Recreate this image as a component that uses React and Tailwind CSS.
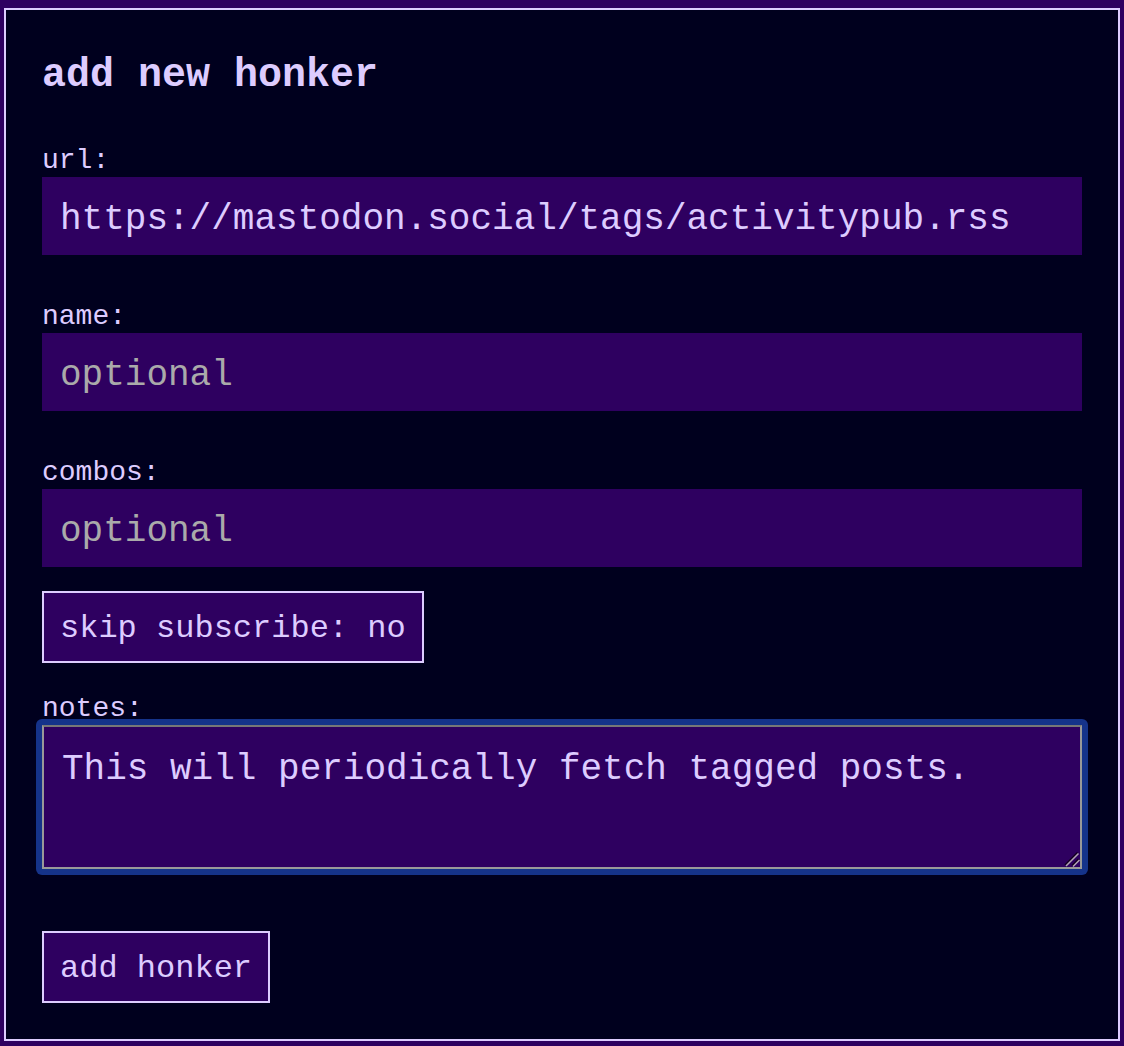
import React from "react";

const field =
  "block h-[78px] w-full bg-[#2e0060] px-[18px] pt-1.5 text-[36px] text-[#ddccff] outline-none placeholder:text-[#aaaaaa] placeholder:opacity-100";
const button =
  "block h-[72px] border-2 border-[#ddccff] bg-[#2e0060] px-4 pt-1 text-[32px] leading-9";
const label = "block text-[28px] leading-8";

function Field({ id, title, ...props }) {
  return (
    <div>
      <label htmlFor={id} className={label}>{title}</label>
      <input id={id} type="text" className={field} {...props} />
    </div>
  );
}

function ResizeGrip() {
  return (
    <svg
      aria-hidden="true"
      className="pointer-events-none absolute right-2 bottom-2 size-4"
      viewBox="0 0 16 16"
      fill="none"
      strokeWidth="1.5"
    >
      <path d="M1 14 13.5 1.5M8 14.5 14.5 8" stroke="#12001f" />
      <path d="M2 15 14.5 2.5M9 15.5 15.5 9" stroke="#b3a6b4" />
    </svg>
  );
}

export default function App() {
  return (
    <main className="min-h-screen bg-[#2e0060] px-1 pt-2 pb-1 font-['Liberation_Mono',monospace] text-[#ddccff]">
      <form className="border-2 border-[#ddccff] bg-[#00001e] px-9 pt-[42px] pb-9" onSubmit={(e) => e.preventDefault()}>
        <h1 className="text-[40px] leading-12 font-bold">add new honker</h1>
        <div className="mt-[45px] flex flex-col gap-[46px]">
          <Field id="url" title="url:" defaultValue="https://mastodon.social/tags/activitypub.rss" />
          <Field id="name" title="name:" placeholder="optional" />
          <Field id="combos" title="combos:" placeholder="optional" />
        </div>
        <button type="button" className={`${button} mt-6`}>skip subscribe: no</button>
        <div className="mt-[30px]">
          <label htmlFor="notes" className={label}>notes:</label>
          <div className="relative -mx-1.5 -my-1.5 rounded-md bg-[#15338a] p-1.5">
            <textarea
              id="notes"
              className="block h-36 w-full resize-y rounded-none border-2 border-[#999999] border-t-[#777777] bg-[#2e0060] px-[18px] py-[22px] text-[36px] leading-[42px] outline-none [&::-webkit-resizer]:hidden"
              defaultValue="This will periodically fetch tagged posts."
            />
            <ResizeGrip />
          </div>
        </div>
        <button type="submit" className={`${button} mt-[62px]`}>add honker</button>
      </form>
    </main>
  );
}
